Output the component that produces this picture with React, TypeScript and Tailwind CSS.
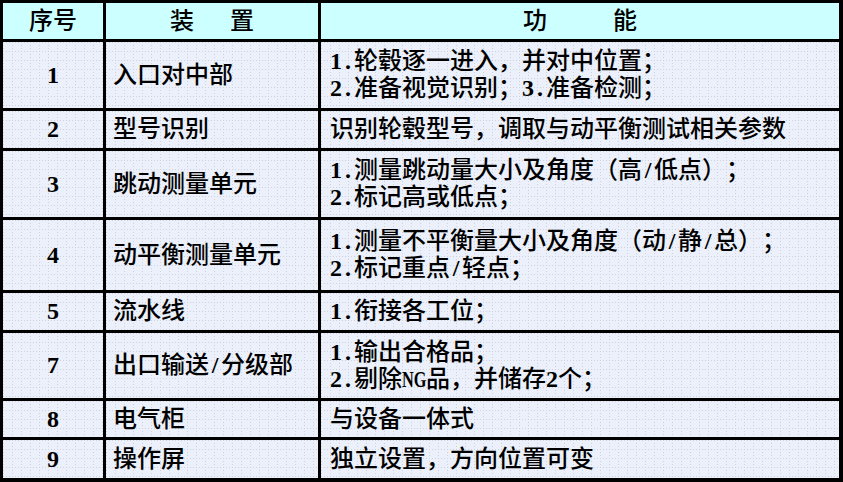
const rows: { no: string; name: string; func: string[] }[] = [
  { no: "1", name: "入口对中部", func: ["1.轮毂逐一进入，并对中位置；", "2.准备视觉识别；3.准备检测；"] },
  { no: "2", name: "型号识别", func: ["识别轮毂型号，调取与动平衡测试相关参数"] },
  { no: "3", name: "跳动测量单元", func: ["1.测量跳动量大小及角度（高/低点）；", "2.标记高或低点；"] },
  { no: "4", name: "动平衡测量单元", func: ["1.测量不平衡量大小及角度（动/静/总）；", "2.标记重点/轻点；"] },
  { no: "5", name: "流水线", func: ["1.衔接各工位；"] },
  { no: "7", name: "出口输送/分级部", func: ["1.输出合格品；", "2.剔除NG品，并储存2个；"] },
  { no: "8", name: "电气柜", func: ["与设备一体式"] },
  { no: "9", name: "操作屏", func: ["独立设置，方向位置可变"] },
]

const body =
  "bg-[#ebf0fa] [background-image:conic-gradient(at_1px_1px,transparent_75%,#cdd2de_0),conic-gradient(at_1px_1px,transparent_75%,#cdd2de_0)] [background-size:3px_9px,9px_3px]"

// fixed cells for half-width digits and full-width punctuation, like the song-style font in the shot
function Text({ s }: { s: string }) {
  const parts = s.split(/([A-Z]+)/)
  return (
    <>
      {parts.map((part, k) =>
        /^[A-Z]+$/.test(part) ? (
          <span key={k} className="inline-block w-[24px] overflow-visible whitespace-nowrap">
            <span className="inline-block origin-left scale-x-[0.68] font-bold">{part}</span>
          </span>
        ) : (
          Array.from(part).map((c, i) => {
            const key = k + "-" + i
            if (/[0-9./]/.test(c))
              return (
                <span key={key} className="inline-block w-[12px] text-center font-bold">
                  {c}
                </span>
              )
            if (c === "（")
              return (
                <span key={key} className="inline-block w-[24px] text-right">
                  {c}
                </span>
              )
            if (/[，；）]/.test(c))
              return (
                <span key={key} className="inline-block w-[24px] text-left">
                  {c}
                </span>
              )
            return <span key={key}>{c}</span>
          })
        )
      )}
    </>
  )
}

export default function App() {
  return (
    <div className="w-[843px] h-[482px] bg-white">
      <div
        className="grid grid-cols-[100px_212px_1fr] grid-rows-[36px_66px_37px_66px_70px_37px_65px_36px_38px] gap-[3px] bg-black pt-[3px] pl-[3px] pr-[4px] pb-[4px] w-[843px] h-[482px] text-black text-[24px] leading-[27px] font-medium"
        style={{ fontFamily: '"Liberation Serif", "Noto Sans CJK SC", serif' }}
      >
        <div className="bg-[#ccffff] flex items-center justify-center">序号</div>
        <div className="bg-[#ccffff] flex items-center justify-center gap-[36px]">
          <span>装</span>
          <span>置</span>
        </div>
        <div className="bg-[#ccffff] flex items-center justify-center gap-[66px]">
          <span>功</span>
          <span>能</span>
        </div>

        {rows.map((r) => (
          <Row key={r.no} {...r} />
        ))}
      </div>
    </div>
  )
}

function Row({ no, name, func }: { no: string; name: string; func: string[] }) {
  return (
    <>
      <div className={`${body} flex items-center justify-center font-bold`}>{no}</div>
      <div className={`${body} flex items-center pl-[7px] whitespace-nowrap`}>
        <div>
          <Text s={name} />
        </div>
      </div>
      <div className={`${body} flex flex-col justify-center pl-[9px] whitespace-nowrap`}>
        {func.map((f) => (
          <div key={f}>
            <Text s={f} />
          </div>
        ))}
      </div>
    </>
  )
}
